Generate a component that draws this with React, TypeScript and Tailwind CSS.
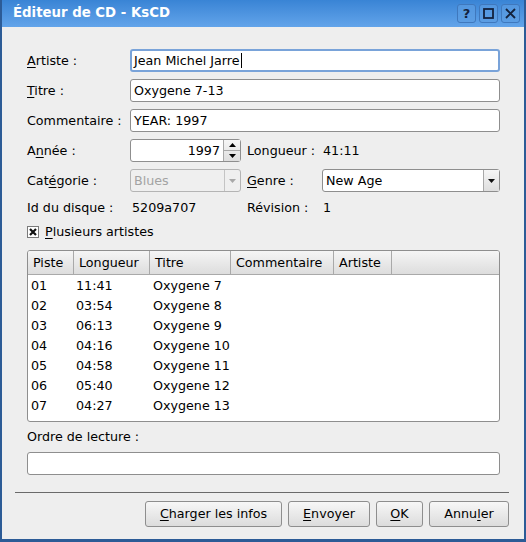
import React from 'react'

const font = {fontFamily: '"DejaVu Sans", "Liberation Sans", sans-serif'}

const tracks = [
  ['01', '11:41', 'Oxygene 7'],
  ['02', '03:54', 'Oxygene 8'],
  ['03', '06:13', 'Oxygene 9'],
  ['04', '04:16', 'Oxygene 10'],
  ['05', '04:58', 'Oxygene 11'],
  ['06', '05:40', 'Oxygene 12'],
  ['07', '04:27', 'Oxygene 13'],
]

const cols = [
  {name: 'Piste', w: 'w-[46px]'},
  {name: 'Longueur', w: 'w-[76px]'},
  {name: 'Titre', w: 'w-[81px]'},
  {name: 'Commentaire', w: 'w-[103px]'},
  {name: 'Artiste', w: 'w-[58px]'},
]

function U({children}: {children: React.ReactNode}) {
  return <span className="underline underline-offset-[1.5px]">{children}</span>
}

function Label({children, w = 'w-[103px]'}: {children: React.ReactNode; w?: string}) {
  return <div className={`${w} shrink-0 leading-[23px]`}>{children}</div>
}

function TextBox({value, focused}: {value: string; focused?: boolean}) {
  return (
    <div
      className={`flex-1 h-[23px] bg-white rounded-[3px] px-[2px] flex items-center ${
        focused ? 'border-2 border-[#79a3d9]' : 'border border-[#8e8e8e] pl-[3px]'
      }`}
    >
      <span>{value}</span>
      {focused ? <span className="w-px h-[15px] bg-black ml-px" /> : null}
    </div>
  )
}

function Arrow({up, color = '#000'}: {up?: boolean; color?: string}) {
  return (
    <svg width="7" height="4" viewBox="0 0 7 4">
      <path d={up ? 'M0 4 L3.5 0 L7 4 Z' : 'M0 0 L7 0 L3.5 4 Z'} fill={color} />
    </svg>
  )
}

function Combo({value, disabled, w}: {value: string; disabled?: boolean; w: string}) {
  return (
    <div
      className={`${w} h-[23px] rounded-[3px] border flex ${
        disabled ? 'border-[#b4b4b4] bg-[#efefef] text-[#a3a3a3]' : 'border-[#8e8e8e] bg-white'
      }`}
    >
      <div className="flex-1 flex items-center pl-[3px]">{value}</div>
      <div
        className={`w-[16px] flex items-center justify-center border-l ${
          disabled ? 'border-[#c4c4c4]' : 'border-[#a8a8a8] bg-gradient-to-b from-[#f6f6f6] to-[#dedede]'
        }`}
      >
        <Arrow color={disabled ? '#a8a8a8' : '#111'} />
      </div>
    </div>
  )
}

function Btn({children, w}: {children: React.ReactNode; w: string}) {
  return (
    <div
      className={`${w} h-[26px] rounded-[3px] border border-[#8e8e8e] bg-gradient-to-b from-[#f7f7f7] to-[#dcdcdc] flex items-center justify-center`}
    >
      {children}
    </div>
  )
}

export default function App() {
  return (
    <div className="w-[526px] h-[542px] bg-[#2c5b96] text-black text-[12.7px]" style={font}>
      {/* title bar */}
      <div className="h-[27px] mx-[2px] bg-gradient-to-b from-[#3984d5] to-[#62a4ea] flex items-center pl-[11px] pr-[4px]">
        <div className="flex-1 text-white font-bold text-[13.3px] pb-[1px]">Éditeur de CD - KsCD</div>
        <div className="flex gap-[3px]">
          <div className="w-[19px] h-[19px] rounded-[3px] border border-[#3f78bd] bg-[#5b9de3]/70 flex items-center justify-center text-[#13223d] font-bold text-[13px]">
            ?
          </div>
          <div className="w-[19px] h-[19px] rounded-[3px] border border-[#3f78bd] bg-[#5b9de3]/70 flex items-center justify-center">
            <svg width="11" height="11" viewBox="0 0 11 11">
              <rect x="1" y="1" width="9" height="9" fill="none" stroke="#13223d" strokeWidth="1.8" />
            </svg>
          </div>
          <div className="w-[19px] h-[19px] rounded-[3px] border border-[#3f78bd] bg-[#5b9de3]/70 flex items-center justify-center">
            <svg width="11" height="11" viewBox="0 0 11 11">
              <path d="M1 1 L10 10 M10 1 L1 10" stroke="#13223d" strokeWidth="1.9" />
            </svg>
          </div>
        </div>
      </div>

      {/* client area */}
      <div className="mx-[2px] h-[512px] bg-[#eeeeee] pl-[13px] pr-[15px] pt-[22px] flex flex-col">
        <div className="ml-[12px] mr-[9px] flex flex-col">
          <div className="flex flex-col gap-[7px]">
            <div className="flex">
              <Label>
                <U>A</U>rtiste :
              </Label>
              <TextBox value="Jean Michel Jarre" focused />
            </div>
            <div className="flex">
              <Label>
                <U>T</U>itre :
              </Label>
              <TextBox value="Oxygene 7-13" />
            </div>
            <div className="flex">
              <Label>Commentaire :</Label>
              <TextBox value="YEAR: 1997" />
            </div>
            <div className="flex">
              <Label>
                A<U>n</U>née :
              </Label>
              <div className="w-[111px] h-[23px] rounded-[3px] border border-[#8e8e8e] bg-white flex">
                <div className="flex-1 flex items-center justify-end pr-[3px]">1997</div>
                <div className="w-[17px] flex flex-col border-l border-[#a8a8a8] bg-gradient-to-b from-[#f6f6f6] to-[#dedede]">
                  <div className="flex-1 flex items-center justify-center border-b border-[#a8a8a8]">
                    <Arrow up />
                  </div>
                  <div className="flex-1 flex items-center justify-center">
                    <Arrow />
                  </div>
                </div>
              </div>
              <div className="w-[6px]" />
              <Label w="w-[76px]">Longueur :</Label>
              <div className="leading-[23px]">41:11</div>
            </div>
            <div className="flex">
              <Label>
                Cat<U>é</U>gorie :
              </Label>
              <Combo value="Blues" disabled w="w-[111px]" />
              <div className="w-[6px]" />
              <Label w="w-[75px]">
                <U>G</U>enre :
              </Label>
              <Combo value="New Age" w="flex-1" />
            </div>
          </div>

          <div className="flex h-[20px] mt-[6px] items-center">
            <div className="w-[105px]">Id du disque :</div>
            <div className="w-[115px]">5209a707</div>
            <div className="w-[76px]">Révision :</div>
            <div>1</div>
          </div>

          <div className="flex h-[20px] mt-[4px] items-center gap-[6px]">
            <div className="w-[12px] h-[12px] border border-[#7a7a7a] bg-white flex items-center justify-center">
              <svg width="8" height="8" viewBox="0 0 8 8">
                <path d="M1 1 L7 7 M7 1 L1 7" stroke="#111" strokeWidth="2.2" />
              </svg>
            </div>
            <div>
              <U>P</U>lusieurs artistes
            </div>
          </div>

          {/* track list */}
          <div className="mt-[8px] h-[172px] rounded-[3px] border border-[#8e8e8e] bg-white overflow-hidden">
            <div className="flex h-[24px] bg-gradient-to-b from-[#f5f5f5] to-[#dddddd] border-b border-[#a9a9a9]">
              {cols.map((c) => (
                <div key={c.name} className={`${c.w} border-r border-[#a9a9a9] pl-[5px] flex items-center`}>
                  {c.name}
                </div>
              ))}
            </div>
            {tracks.map((t) => (
              <div key={t[0]} className="flex h-[20px] items-center pt-px">
                <div className="w-[46px] pl-[3px]">{t[0]}</div>
                <div className="w-[76px] pl-[2px]">{t[1]}</div>
                <div className="pl-[3px]">{t[2]}</div>
              </div>
            ))}
          </div>

          <div className="mt-[6px] h-[18px] flex items-center">Ordre de lecture :</div>
          <div className="mt-[6px] flex">
            <TextBox value="" />
          </div>
        </div>

        <div className="mt-[17px] h-px bg-[#6a6a6a]" />

        <div className="mt-[8px] flex justify-end gap-[6px]">
          <Btn w="w-[137px]">
            <span>
              <U>C</U>harger les infos
            </span>
          </Btn>
          <Btn w="w-[82px]">
            <span>
              <U>E</U>nvoyer
            </span>
          </Btn>
          <Btn w="w-[47px]">
            <span>
              <U>O</U>K
            </span>
          </Btn>
          <Btn w="w-[80px]">
            <span>
              Annu<U>l</U>er
            </span>
          </Btn>
        </div>
      </div>
    </div>
  )
}
